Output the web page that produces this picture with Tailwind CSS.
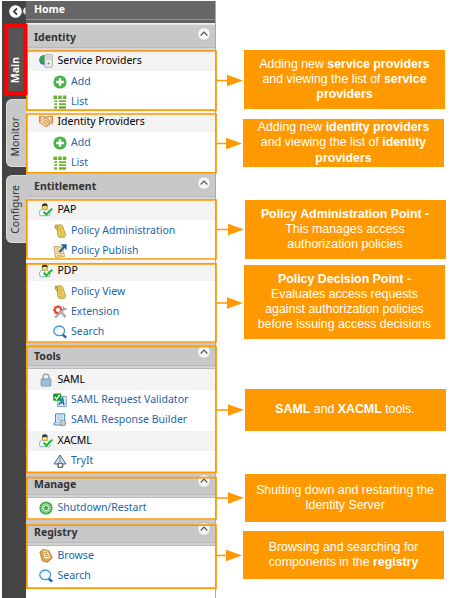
<!DOCTYPE html>
<html lang="en">
<head>
<meta charset="utf-8">
<title>Identity Server menu</title>
<script src="https://cdn.jsdelivr.net/npm/@tailwindcss/browser@4"></script>
</head>
<body class="bg-white">
<svg class="hidden">
  <symbol id="up" viewBox="0 0 14 14"><circle cx="7" cy="7" r="6.2" fill="#f5f5f5" stroke="#bbb" stroke-width=".6"/><path d="M3.7 8.5 7 5.2l3.3 3.3" fill="none" stroke="#555" stroke-width="1.2"/></symbol>
  <symbol id="provider" viewBox="0 0 14 14"><circle cx="5" cy="6" r="4.8" fill="#2d78bd"/><path d="M1 3 5 1l2 3-3 2 2 4-3-1-2-3z" fill="#35a845"/><rect x="5.7" y=".7" width="7.6" height="12.5" rx="1" fill="#eee" stroke="#999" stroke-width=".8"/><path d="M7 3h5M7 5h5" stroke="#aaa" stroke-width=".8"/><circle cx="9.5" cy="9.5" r="1" fill="#777"/></symbol>
  <symbol id="add" viewBox="0 0 14 14"><circle cx="7" cy="7" r="6.6" fill="#4bb34b"/><path d="M7 3.2v7.6M3.2 7h7.6" stroke="#fff" stroke-width="2.4"/></symbol>
  <symbol id="list" viewBox="0 0 14 14"><path d="M.5 2h3.5M5.2 2h3.5M9.8 2h3.5" stroke="#6cb52c" stroke-width="2.8"/><path d="M1.3 6.2h2.8M6 6.2h7M1.3 9.2h2.8M6 9.2h7M1.3 12.2h2.8M6 12.2h7" stroke="#6cb52c" stroke-width="1.7"/><path d="M.5 3.5h3.5M5.2 3.5h3.5M9.8 3.5h3.5M1.3 13.3h2.8M6 13.3h7" stroke="#3d7a1d" stroke-width=".6"/></symbol>
  <symbol id="hands" viewBox="0 0 14 14"><path d="M0 1.5 3 1l4 1.2L11 1l3 .5v6.3l-2 .7-4.4 3.3-2-.4L2 8.5 0 7.5z" fill="#f6d3a2" stroke="#b57534" stroke-width=".7"/><path d="m4 4 3-1.5 5 5M6 5l5 4M4 6.5 8.5 10.5" fill="none" stroke="#a8622c" stroke-width=".7"/><path d="M0 1.5 1.6 1v6H0zM12.6 1l1.4.5v6h-1.4z" fill="#d5872f"/></symbol>
  <symbol id="user" viewBox="0 0 14 14"><path d="M1 12.7C-.2 9 1 6.2 3.6 6.2h3.6c2.5 0 4 2 3.6 6.5z" fill="#f2f8ff" stroke="#809db9" stroke-width=".8"/><circle cx="5.8" cy="4.2" r="2.7" fill="#f8dd63" stroke="#806c20" stroke-width=".5"/><path d="M3.1 3.8C2.6 1.3 4 .3 5.8.3s3.3 1.2 2.7 3.3C7.6 2.4 5 2.4 3.1 3.8" fill="#333"/><path d="m4.7 8.6 2.6 3.1 6-6" fill="none" stroke="#16b81c" stroke-width="1.9"/></symbol>
  <symbol id="scroll" viewBox="0 0 14 14"><path d="M2 1.3 8 .7l1.5 1.2 3.2 9.3-1.2 2L6 13.3 5 12 4.3 6 2.4 4.4z" fill="#f0d562" stroke="#a98520" stroke-width=".8"/><path d="M4.8 3h3.7M5 5.2h4M5.6 7.2h4M6.2 9.2h4M6.6 11.3h4" stroke="#bd9a38" stroke-width=".6"/><path d="m2.6 1.8 1.6.4.3 3.4" fill="none" stroke="#8c6a15" stroke-width=".7"/></symbol>
  <symbol id="publish" viewBox="0 0 14 14"><path d="m1 2.6 8.5.4 2 9.5-9 .9z" fill="#f9e4ae" stroke="#bc9146" stroke-width=".8"/><path d="M3 5h3M3.4 7.4h6M3.7 9.4h6M4 11.4h5" stroke="#c5a467" stroke-width=".7"/><path d="m6.5 8 5.5-6" stroke="#205ca6" stroke-width="1.9"/><path d="M7.6.2h6v6z" fill="#205ca6"/></symbol>
  <symbol id="tools" viewBox="0 0 14 14"><circle cx="5" cy="5" r="3.3" fill="none" stroke="#e04b2c" stroke-width="1.8"/><path d="M5 0v10M0 5h10M1.5 1.5l7 7M8.5 1.5l-7 7" stroke="#e04b2c" stroke-width="1.3"/><circle cx="5" cy="5" r="2.1" fill="#fff"/><path d="m2 12.5 9.5-9M7 6l5.5 6" stroke="#888" stroke-width="2.3"/><path d="m2.2 12.2 9-8.5M7.4 6.8l4.8 4.8" stroke="#ddd" stroke-width="1"/><path d="m10.5 1.5.2 2.2 3 .3" fill="none" stroke="#999" stroke-width="1.5"/></symbol>
  <symbol id="search" viewBox="0 0 14 14"><path d="m9.2 9.3 4 3.3" stroke="#2164a8" stroke-width="2.4"/><ellipse cx="6.2" cy="5.8" rx="5.4" ry="4.8" fill="#f4fbff" stroke="#4694d1" stroke-width="1.3"/><path d="M2.7 5.3c.5-1.6 1.8-2.3 3.3-2.3" fill="none" stroke="#c5e4f6"/></symbol>
  <symbol id="lock" viewBox="0 0 14 14"><path d="M4 6V4.1a3 3 0 0 1 6 0V6" fill="none" stroke="#a4acb2" stroke-width="1.7"/><rect x="2" y="5.7" width="10" height="7.6" rx="1" fill="#8fb0ca" stroke="#809db4" stroke-width=".7"/><path d="M3 8h8M3 10h8M3 12h8" stroke="#bcd2e2" stroke-width=".7"/></symbol>
  <symbol id="validate" viewBox="0 0 14 14"><path d="M5.5 3.5h7.8v10H4.5z" fill="#e3eff7" stroke="#6392b5" stroke-width=".8"/><path d="m6 12 3.6-6.7L11 12M7.5 9.7h3.3" fill="none" stroke="#286fa5" stroke-width="1.4"/><rect x=".2" y=".4" width="8" height="7.3" rx="1" fill="#189c2c"/><path d="M1.7 4 3.6 6l3.2-4" fill="none" stroke="#fff" stroke-width="1.4"/></symbol>
  <symbol id="builder" viewBox="0 0 14 14"><path d="M2.5.8h9.2v8L12 12H1.2c-1-1.7.3-2.4 1.3-2.4z" fill="#dcecfa" stroke="#4c89bd" stroke-width="1"/><path d="M4 3h6M4 5h6M4 7h5M3 9.7h5" stroke="#8fb8dd" stroke-width=".8"/><circle cx="10" cy="10" r="2.5" fill="#eee" stroke="#858d94" stroke-width="1.5" stroke-dasharray="1.3 .5"/><circle cx="10" cy="10" r="1" fill="#fff" stroke="#888" stroke-width=".5"/></symbol>
  <symbol id="try" viewBox="0 0 14 14"><path d="M7 1 13 10H9.8v3.2H5V10H1z" fill="#dbe5ee" stroke="#496680" stroke-width="1"/><path d="M7 2v5M4.2 9.5 7 6.7l2.8 2.8" fill="none" stroke="#6f8eaa"/><path d="M5.3 9.5h4v3.7h-4z" fill="#fff" stroke="#444" stroke-width=".8"/></symbol>
  <symbol id="restart" viewBox="0 0 14 14"><circle cx="7" cy="7" r="6.6" fill="#3cae45"/><circle cx="7" cy="7" r="4" fill="none" stroke="#e3f7e3" stroke-width="1.6" stroke-dasharray="1.3 .9"/><circle cx="7" cy="7" r="2.6" fill="none" stroke="#e3f7e3" stroke-width="1"/></symbol>
  <symbol id="book" viewBox="0 0 14 14"><path d="m.8 3 3.4-2.6 5.8 1.4L13.4 9 8.5 13.4l-5.4-1.6z" fill="#d9a544" stroke="#a9772c" stroke-width=".7"/><path d="m3.5.9 5.8 1.4 2.6 7.2-6.6.8z" fill="#fae9b4" stroke="#c5933e" stroke-width=".6"/><path d="m5 3.3 3.2.6M5.5 5.2l3.5.4M6 7.2l3.6.2" stroke="#a88443" stroke-width=".8"/></symbol>
</svg>

<main class="relative flex h-[598px] w-[454px] overflow-hidden bg-white pl-[1.5px] pt-px font-['Noto_Sans','Open_Sans',sans-serif] text-[10.5px]">
  <aside class="flex w-[24px] shrink-0 flex-col bg-[#444] pl-[4.5px]">
    <div class="flex h-[25px] items-start pt-[4px] pl-[2.5px]">
      <svg class="size-[13px]" viewBox="0 0 13 13"><circle cx="6.5" cy="6.5" r="6.3" fill="#fff"/><path d="M8 3.4 4.9 6.5 8 9.6" fill="none" stroke="#333" stroke-width="1.7"/></svg>
    </div>
    <div class="flex h-[66px] items-center justify-center bg-[#555] pt-[23px]"><span class="rotate-180 text-[10.5px] font-bold text-white [writing-mode:vertical-rl]">Main</span></div>
    <div class="mt-[7px] flex h-[68px] items-center justify-center rounded-l-[6px] border border-r-0 border-[#ddd] bg-[#c8c8c8] pt-[8px]"><span class="rotate-180 text-[10.5px] text-[#333] [writing-mode:vertical-rl]">Monitor</span></div>
    <div class="mt-[8px] flex h-[68px] items-center justify-center rounded-l-[6px] border border-r-0 border-[#ddd] bg-[#c8c8c8]"><span class="rotate-180 text-[10.5px] text-[#333] [writing-mode:vertical-rl]">Configure</span></div>
  </aside>

  <nav id="menu" class="flex w-[190.5px] shrink-0 flex-col border-r border-[#aaa]">
    <div class="flex h-[18px] items-center bg-[#666] pl-[8.5px] text-[10.5px] font-bold text-white">Home</div>
    <div class="h-[5px] border-t border-b border-t-[#909090] border-b-[#eee] bg-[#626262]"></div>
  </nav>

  <section class="flex flex-col pl-[27px] font-['Liberation_Sans',Arial,sans-serif] text-[12.35px] leading-[15.2px] text-white">
    <div class="mt-[49px] ml-px flex h-[59px] w-[201px] items-center justify-center bg-[#ff9900] text-center"><p>Adding new <b>service providers</b><br>and viewing the list of <b>service</b><br><b>providers</b></p></div>
    <div class="mt-[10px] flex h-[48px] w-[201px] items-center justify-center bg-[#ff9900] text-center"><p>Adding new <b>identity providers</b><br>and viewing the list of <b>identity</b><br><b>providers</b></p></div>
    <div class="mt-[33px] ml-[1.5px] flex h-[59px] w-[201px] items-center justify-center bg-[#ff9900] text-center"><p><b>Policy Administration Point -</b><br>This manages access<br>authorization policies</p></div>
    <div class="mt-[6px] ml-px flex h-[74px] w-[201px] items-center justify-center bg-[#ff9900] text-center"><p><b>Policy Decision Point -</b><br>Evaluates access requests<br>against authorization policies<br>before issuing access decisions</p></div>
    <div class="mt-[50px] ml-[1.5px] flex h-[42px] w-[201px] items-center justify-center bg-[#ff9900] text-center"><p><b>SAML</b> and <b>XACML</b> tools.</p></div>
    <div class="mt-[43px] ml-[1.5px] flex h-[48px] w-[201px] items-center justify-center bg-[#ff9900] text-center"><p>Shutting down and restarting the<br>Identity Server</p></div>
    <div class="mt-[9px] flex h-[48px] w-[201px] items-center justify-center bg-[#ff9900] text-center"><p>Browsing and searching for<br>components in the <b>registry</b></p></div>
  </section>

  <!-- highlight frames and connectors over the menu -->
  <svg class="absolute inset-0" width="454" height="598" viewBox="0 0 454 598">
    <path d="M25.5 7a4.5 4.5 0 0 0 0 8z" fill="#eee"/>
    <g fill="none" stroke="#ff9900" stroke-width="1.7">
      <path d="M26.8 51H216v59.2H26.8zM26.8 114H216v58.8H26.8zM26.8 200H216v59H26.8zM26.8 263.8H216v78.2H26.8zM26.8 346.3H216v126.2H26.8zM26.8 477.7H216v41.3H26.8zM26.8 525.2H216v63H26.8z"/>
      <path d="M216 80.5h14M216 143.5h14M216 229.5h14M216 303h14M216 410h14M216 498h14M216 555.5h14"/>
    </g>
    <path fill="#ff9900" d="M227 74.7v11.6l16-5.8zM226 137.7v11.6l16-5.8zM228 223.7v11.6l16-5.8zM227 297.2v11.6l16-5.8zM228 404.2v11.6l16-5.8zM228 492.2v11.6l16-5.8zM226 549.7v11.6l16-5.8z"/>
    <path d="M25.5 25.5H6.3v67.8h19.2z" fill="none" stroke="#f00" stroke-width="4"/>
  </svg>
</main>

<script>
// kind, icon, label
const items = [
  ['h', '', 'Identity'], ['g', 'provider', 'Service Providers'], ['i', 'add', 'Add'], ['i', 'list', 'List'],
  ['g', 'hands', 'Identity Providers'], ['i', 'add', 'Add'], ['i', 'list', 'List'],
  ['h', '', 'Entitlement'], ['g', 'user', 'PAP'], ['i', 'scroll', 'Policy Administration'], ['i', 'publish', 'Policy Publish'],
  ['g', 'user', 'PDP'], ['i', 'scroll', 'Policy View'], ['i', 'tools', 'Extension'], ['i', 'search', 'Search'],
  ['h', '', 'Tools'], ['g', 'lock', 'SAML'], ['i', 'validate', 'SAML Request Validator'], ['i', 'builder', 'SAML Response Builder'],
  ['g', 'user', 'XACML'], ['i', 'try', 'TryIt'],
  ['h', '', 'Manage'], ['l', 'restart', 'Shutdown/Restart'],
  ['h', '', 'Registry'], ['l', 'book', 'Browse'], ['l', 'search', 'Search']
];
const style = {
  g: 'flex h-[20.35px] shrink-0 items-center gap-[4.5px] bg-[#f3f3f3] pl-[13.5px] text-black',
  i: 'flex h-[20.35px] shrink-0 items-center gap-[4.5px] bg-white pl-[27px] text-[#2464a8]',
  l: 'flex h-[20.35px] shrink-0 items-center gap-[4.5px] bg-white pl-[13.5px] text-[#2464a8]'
};
document.getElementById('menu').insertAdjacentHTML('beforeend', items.map(([k, icon, label]) => k === 'h'
  ? `<div class="flex h-[27px] shrink-0 flex-col"><div class="flex h-[23px] items-center justify-between border-t border-[#e4e4e4] bg-[#c8c8c8] pr-[4.5px] pl-[8.5px] pt-[2px] font-bold text-[#333]"><span class="whitespace-nowrap pt-[2px]">${label}</span><svg class="mb-[6px] size-[14px]"><use href="#up"/></svg></div><div class="h-[4px] border-y border-[#b8b8b8] bg-[#d4d4d4]"></div></div>`
  : `<div class="${style[k]}"><svg class="size-[14px] shrink-0"><use href="#${icon}"/></svg><span class="whitespace-nowrap">${label}</span></div>`).join(''));
</script>
</body>
</html>
